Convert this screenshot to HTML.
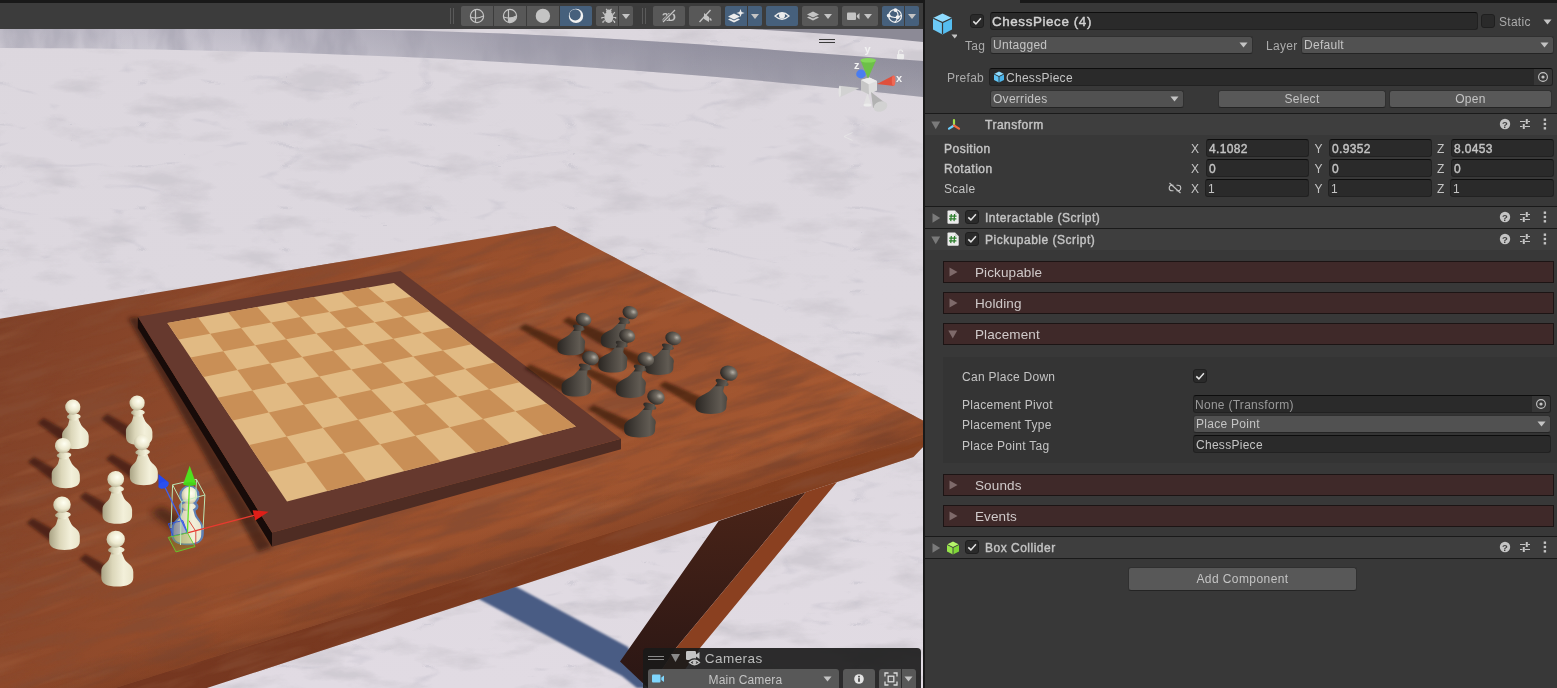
<!DOCTYPE html>
<html lang="en"><head><meta charset="utf-8"><title>Unity - ChessPiece (4)</title>
<style>
*{box-sizing:border-box;margin:0;padding:0}
html,body{width:1557px;height:688px;overflow:hidden;background:#383838;font-family:"Liberation Sans",sans-serif;font-size:12px;color:#c4c4c4}
.abs,.scene,.tb,.tbtn,.insp *{position:absolute}
#scenewrap{will-change:transform;position:absolute;left:0;top:0;width:923px;height:688px;overflow:hidden;background:#ddd8df}
.scene{left:0;top:0}
.tb{left:0;top:0;width:923px;height:29px;background:#3c3c3c;border-top:3px solid #191919}
.tbtn{top:3px;height:20px;background:#585858;border-radius:2px}
.tbtn.on{background:#46607c}
.tbtn svg{position:absolute;left:0;top:0}
#divider{position:absolute;left:923px;top:0;width:2px;height:688px;background:#191919}
.insp{will-change:transform;position:absolute;left:925px;top:0;width:632px;height:688px;background:#383838;overflow:hidden}
.t{white-space:nowrap;line-height:16px;height:16px;color:#c4c4c4;letter-spacing:.28px}
.b{font-weight:normal;-webkit-text-stroke-width:.4px;letter-spacing:.5px}
.num{letter-spacing:.35px}
.fld{background:#2a2a2a;border:1px solid #212121;border-top-color:#0d0d0d;border-radius:3px}
.dd{background:#515151;border:1px solid #303030;border-bottom-color:#242424;border-radius:3px}
.btn{background:#585858;border:1px solid #303030;border-bottom-color:#242424;border-radius:3px;text-align:center}
.hdr{left:0;width:632px;height:22px;background:#3e3e3e;border-top:1px solid #1a1a1a}
.bar{left:18px;width:611px;height:22px;background:#3f2929;border:1px solid #1c1414}
.cb{width:14px;height:14px;background:#2a2a2a;border:1px solid #1f1f1f;border-radius:3px}
.cam{will-change:transform;position:absolute;left:643px;top:648px;width:278px;height:40px;background:rgba(25,25,25,.91);border-radius:4px 4px 0 0}
</style></head><body>
<div id="scenewrap">
<svg class="scene" width="923" height="688" viewBox="0 0 923 688">
<defs>
<filter id="marble" x="0" y="0" width="100%" height="100%">
<feTurbulence type="fractalNoise" baseFrequency="0.014 0.042" numOctaves="5" seed="4" result="n"/>
<feColorMatrix in="n" type="matrix" values="0 0 0 0 0.60  0 0 0 0 0.57  0 0 0 0 0.62  3.6 0 0 0 -1.85" result="c"/>
<feComposite in="c" in2="SourceGraphic" operator="in"/>
</filter>
<filter id="veins" x="0" y="0" width="100%" height="100%">
<feTurbulence type="turbulence" baseFrequency="0.007 0.024" numOctaves="3" seed="31" result="n"/>
<feColorMatrix in="n" type="matrix" values="0 0 0 0 0.55  0 0 0 0 0.53  0 0 0 0 0.60  -9 0 0 0 0.95" result="c"/>
<feComposite in="c" in2="SourceGraphic" operator="in"/>
</filter>
<filter id="marblev" x="0" y="0" width="100%" height="100%">
<feTurbulence type="fractalNoise" baseFrequency="0.03 0.012" numOctaves="4" seed="5" result="n"/>
<feColorMatrix in="n" type="matrix" values="0 0 0 0 0.30  0 0 0 0 0.29  0 0 0 0 0.36  3 0 0 0 -1.35" result="c"/>
<feComposite in="c" in2="SourceGraphic" operator="in"/>
</filter>
<filter id="wood" x="0" y="0" width="100%" height="100%">
<feTurbulence type="fractalNoise" baseFrequency="0.012 0.085" numOctaves="4" seed="3" result="n"/>
<feColorMatrix in="n" type="matrix" values="0 0 0 0 0.24  0 0 0 0 0.07  0 0 0 0 0.03  3.2 0 0 0 -1.3" result="c"/>
<feComposite in="c" in2="SourceGraphic" operator="in"/>
</filter>
<filter id="woodl" x="0" y="0" width="100%" height="100%">
<feTurbulence type="fractalNoise" baseFrequency="0.006 0.07" numOctaves="3" seed="9" result="n"/>
<feColorMatrix in="n" type="matrix" values="0 0 0 0 0.85  0 0 0 0 0.45  0 0 0 0 0.22  2.2 0 0 0 -1.2" result="c"/>
<feComposite in="c" in2="SourceGraphic" operator="in"/>
</filter>
<filter id="blur15"><feGaussianBlur stdDeviation="1.6"/></filter>
<filter id="blur2"><feGaussianBlur stdDeviation="2"/></filter>
<filter id="blur3"><feGaussianBlur stdDeviation="3.5"/></filter>
<filter id="blur1"><feGaussianBlur stdDeviation="0.8"/></filter>
<linearGradient id="floorg" x1="0" y1="0" x2="0" y2="1">
<stop offset="0" stop-color="#dcd7de"/><stop offset="0.45" stop-color="#ddd8df"/><stop offset="1" stop-color="#e1dbe3"/>
</linearGradient>
<linearGradient id="wallg" x1="0" y1="0" x2="1" y2="0">
<stop offset="0" stop-color="#dcd8e0"/><stop offset="0.3" stop-color="#d2ced8"/><stop offset="0.52" stop-color="#b2afbb"/><stop offset="0.75" stop-color="#9a98a6"/><stop offset="1" stop-color="#8f8d9b"/>
</linearGradient>
<linearGradient id="topg" x1="0" y1="0" x2="1" y2="0.3">
<stop offset="0" stop-color="#7b3e27"/><stop offset="0.45" stop-color="#974e2c"/><stop offset="1" stop-color="#a65932"/>
</linearGradient>
<linearGradient id="wallv" x1="0" y1="0" x2="0" y2="1"><stop offset="0" stop-color="#40405a" stop-opacity="0.14"/><stop offset="1" stop-color="#fff" stop-opacity="0.14"/></linearGradient>
<linearGradient id="edgeg" gradientUnits="userSpaceOnUse" x1="500" y1="567" x2="488" y2="530"><stop offset="0" stop-color="#3a1208" stop-opacity="0.2"/><stop offset="1" stop-color="#3a1208" stop-opacity="0"/></linearGradient>
<linearGradient id="legg" x1="0" y1="0" x2="0" y2="1"><stop offset="0" stop-color="#4a2418"/><stop offset="1" stop-color="#2a1614"/></linearGradient>
<linearGradient id="frontg" x1="0" y1="0" x2="1" y2="0"><stop offset="0" stop-color="#743620"/><stop offset="1" stop-color="#84401f"/></linearGradient>
<linearGradient id="wb" x1="0" y1="0" x2="1" y2="0"><stop offset="0" stop-color="#a9a384"/><stop offset="0.35" stop-color="#dcd7ba"/><stop offset="0.7" stop-color="#f3f0da"/><stop offset="1" stop-color="#e9e5cb"/></linearGradient>
<radialGradient id="wh" cx="0.6" cy="0.38" r="0.7"><stop offset="0" stop-color="#fffff2"/><stop offset="0.55" stop-color="#ece8ce"/><stop offset="1" stop-color="#b5af90"/></radialGradient>
<linearGradient id="bb" x1="0" y1="0" x2="1" y2="0"><stop offset="0" stop-color="#2a2622"/><stop offset="0.45" stop-color="#4a453f"/><stop offset="0.8" stop-color="#615b53"/><stop offset="1" stop-color="#4b463f"/></linearGradient>
<radialGradient id="bh" cx="0.68" cy="0.35" r="0.7"><stop offset="0" stop-color="#b4afa5"/><stop offset="0.3" stop-color="#716b62"/><stop offset="1" stop-color="#2e2a26"/></radialGradient>
<radialGradient id="wp" cx="0.4" cy="0.35" r="0.75">
<stop offset="0" stop-color="#fbf8e6"/><stop offset="0.6" stop-color="#e6e0c4"/><stop offset="1" stop-color="#b8b090"/>
</radialGradient>
<radialGradient id="bp" cx="0.6" cy="0.3" r="0.75">
<stop offset="0" stop-color="#8c877d"/><stop offset="0.45" stop-color="#57524b"/><stop offset="1" stop-color="#2e2a26"/>
</radialGradient>
<clipPath id="frontclip"><polygon points="923,432 923,447 913.4,457 207,688 105,688"/></clipPath>
<clipPath id="tableclip"><polygon points="0,318.7 555,226 923,420.4 923,434.5 115,688 0,688"/></clipPath>
</defs>
<rect x="0" y="0" width="923" height="688" fill="url(#floorg)"/>
<rect x="0" y="29" width="923" height="659" fill="#000" filter="url(#marble)" opacity="0.75"/>
<rect x="0" y="29" width="923" height="659" fill="#000" filter="url(#veins)" opacity="0.5"/>
<path d="M750,29 L923,29 L923,42 Q860,35 750,29 Z" fill="#8c8a96"/>
<path d="M0,29 L334,29 Q560,32 800,52 L923,61 L923,97 Q700,72 440,58.5 Q200,48 0,48 Z" fill="url(#wallg)"/>
<path d="M0,29 L334,29 Q560,32 800,52 L923,61 L923,97 Q700,72 440,58.5 Q200,48 0,48 Z" fill="url(#wallv)"/>
<path d="M0,29 L334,29 Q560,32 800,52 L923,61 L923,97 Q700,72 440,58.5 Q200,48 0,48 Z" fill="#000" filter="url(#marblev)" opacity="0.4"/>
<polygon points="477,598 514,585.5 628,647 646,688 637,688 622,676" fill="#485c84" filter="url(#blur1)"/>
<polygon points="718.7,521 806,492 676,648 650,688 648,688 620,661.4" fill="url(#legg)"/>
<polygon points="806,492 837,482 700,648 672,688 650,688 676,648" fill="#8a4020"/>
<polygon points="923,432 923,447 913.4,457 207,688 105,688" fill="url(#frontg)"/>
<g clip-path="url(#frontclip)"><rect x="-100" y="150" width="1150" height="650" fill="#000" filter="url(#wood)" opacity="0.6" transform="rotate(-18 460 450)"/></g>
<polygon points="0,318.7 555,226 923,420.4 923,434.5 115,688 0,688" fill="url(#topg)"/>
<g clip-path="url(#tableclip)"><rect x="-100" y="150" width="1150" height="650" fill="#000" filter="url(#wood)" opacity="0.75" transform="rotate(-17 460 450)"/><rect x="-100" y="150" width="1150" height="650" fill="#000" filter="url(#woodl)" opacity="0.18" transform="rotate(-17 460 450)"/></g>
<g clip-path="url(#tableclip)"><polygon points="923,434.5 115,688 0,688 0,660 923,396" fill="url(#edgeg)"/></g>
<polygon points="128.0,318.0 137.8,316.7 272.0,546.7 258.0,552.0" fill="#1e0c08" opacity="0.55" filter="url(#blur2)"/>
<polygon points="137.8,316.7 272.0,532.6 272.0,546.7 137.8,328.0" fill="#170b09"/>
<polygon points="272.0,532.6 621.0,438.8 621.0,449.2 272.0,546.7" fill="#4e2c23"/>
<polygon points="137.8,316.7 400.5,271.0 621.0,438.8 272.0,532.6" fill="#66392e"/>
<polygon points="167.4,322.9 393.8,282.9 575.9,426.6 287.0,501.5" fill="#e1ba83"/>
<polygon points="167.4,322.9 198.1,317.5 210.2,333.8 178.6,339.6" fill="#c98f56"/>
<polygon points="228.1,312.2 257.3,307.0 271.2,322.5 241.1,328.1" fill="#c98f56"/>
<polygon points="285.9,302.0 313.8,297.0 329.3,311.9 300.6,317.1" fill="#c98f56"/>
<polygon points="341.1,292.2 367.7,287.5 384.6,301.7 357.3,306.7" fill="#c98f56"/>
<polygon points="210.2,333.8 241.1,328.1 255.1,345.2 223.3,351.3" fill="#c98f56"/>
<polygon points="271.2,322.5 300.6,317.1 316.3,333.4 286.1,339.2" fill="#c98f56"/>
<polygon points="329.3,311.9 357.3,306.7 374.6,322.2 345.8,327.7" fill="#c98f56"/>
<polygon points="384.6,301.7 411.4,296.8 430.1,311.5 402.7,316.8" fill="#c98f56"/>
<polygon points="190.6,357.5 223.3,351.3 237.3,370.1 203.5,376.9" fill="#c98f56"/>
<polygon points="255.1,345.2 286.1,339.2 302.1,357.1 270.1,363.5" fill="#c98f56"/>
<polygon points="316.3,333.4 345.8,327.7 363.6,344.7 333.2,350.8" fill="#c98f56"/>
<polygon points="374.6,322.2 402.7,316.8 422.0,333.0 393.2,338.8" fill="#c98f56"/>
<polygon points="237.3,370.1 270.1,363.5 286.3,383.3 252.4,390.4" fill="#c98f56"/>
<polygon points="302.1,357.1 333.2,350.8 351.4,369.6 319.3,376.4" fill="#c98f56"/>
<polygon points="363.6,344.7 393.2,338.8 413.1,356.6 382.7,363.0" fill="#c98f56"/>
<polygon points="422.0,333.0 450.1,327.4 471.6,344.3 442.8,350.4" fill="#c98f56"/>
<polygon points="217.5,397.8 252.4,390.4 268.8,412.5 232.7,420.4" fill="#c98f56"/>
<polygon points="286.3,383.3 319.3,376.4 338.0,397.2 303.9,404.7" fill="#c98f56"/>
<polygon points="351.4,369.6 382.7,363.0 403.3,382.8 371.1,389.9" fill="#c98f56"/>
<polygon points="413.1,356.6 442.8,350.4 465.1,369.1 434.6,375.9" fill="#c98f56"/>
<polygon points="268.8,412.5 303.9,404.7 322.9,428.0 286.6,436.4" fill="#c98f56"/>
<polygon points="338.0,397.2 371.1,389.9 392.3,411.8 358.1,419.8" fill="#c98f56"/>
<polygon points="403.3,382.8 434.6,375.9 457.8,396.6 425.6,404.1" fill="#c98f56"/>
<polygon points="465.1,369.1 494.8,362.6 519.7,382.3 489.2,389.3" fill="#c98f56"/>
<polygon points="249.2,445.1 286.6,436.4 306.1,462.5 267.2,472.0" fill="#c98f56"/>
<polygon points="322.9,428.0 358.1,419.8 380.1,444.3 343.7,453.3" fill="#c98f56"/>
<polygon points="392.3,411.8 425.6,404.1 449.7,427.3 415.4,435.7" fill="#c98f56"/>
<polygon points="457.8,396.6 489.2,389.3 515.3,411.2 483.0,419.1" fill="#c98f56"/>
<polygon points="306.1,462.5 343.7,453.3 366.3,480.9 327.3,491.0" fill="#c98f56"/>
<polygon points="380.1,444.3 415.4,435.7 440.6,461.7 404.1,471.1" fill="#c98f56"/>
<polygon points="449.7,427.3 483.0,419.1 510.3,443.6 476.0,452.5" fill="#c98f56"/>
<polygon points="515.3,411.2 546.7,403.5 575.9,426.6 543.6,435.0" fill="#c98f56"/>
<polygon points="141.2,442.0 130.2,441.0 101.2,419.0 107.2,414.0 141.2,433.0" fill="#2a1008" opacity="0.6" filter="url(#blur15)"/>
<polygon points="77.4,446.0 66.4,445.0 37.4,423.0 43.4,418.0 77.4,437.0" fill="#2a1008" opacity="0.6" filter="url(#blur15)"/>
<polygon points="145.8,482.0 134.8,481.0 105.8,459.0 111.8,454.0 145.8,473.0" fill="#2a1008" opacity="0.6" filter="url(#blur15)"/>
<polygon points="67.8,485.0 56.8,484.0 27.8,462.0 33.8,457.0 67.8,476.0" fill="#2a1008" opacity="0.6" filter="url(#blur15)"/>
<polygon points="119.3,520.0 108.3,519.0 79.3,497.0 85.3,492.0 119.3,511.0" fill="#2a1008" opacity="0.6" filter="url(#blur15)"/>
<polygon points="66.5,546.0 55.5,545.0 26.5,523.0 32.5,518.0 66.5,537.0" fill="#2a1008" opacity="0.6" filter="url(#blur15)"/>
<polygon points="119.3,582.0 108.3,581.0 79.3,559.0 85.3,554.0 119.3,573.0" fill="#2a1008" opacity="0.6" filter="url(#blur15)"/>
<polygon points="614.4,348.0 601.4,345.0 562.4,321.0 568.4,317.0 616.4,338.0" fill="#200b05" opacity="0.55" filter="url(#blur15)"/>
<polygon points="571.0,355.0 558.0,352.0 519.0,328.0 525.0,324.0 573.0,345.0" fill="#200b05" opacity="0.55" filter="url(#blur15)"/>
<polygon points="612.6,372.0 599.6,369.0 560.6,345.0 566.6,341.0 614.6,362.0" fill="#200b05" opacity="0.55" filter="url(#blur15)"/>
<polygon points="659.0,374.5 646.0,371.5 607.0,347.5 613.0,343.5 661.0,364.5" fill="#200b05" opacity="0.55" filter="url(#blur15)"/>
<polygon points="576.2,395.5 563.2,392.5 524.2,368.5 530.2,364.5 578.2,385.5" fill="#200b05" opacity="0.55" filter="url(#blur15)"/>
<polygon points="630.6,396.8 617.6,393.8 578.6,369.8 584.6,365.8 632.6,386.8" fill="#200b05" opacity="0.55" filter="url(#blur15)"/>
<polygon points="710.9,412.3 697.9,409.3 658.9,385.3 664.9,381.3 712.9,402.3" fill="#200b05" opacity="0.55" filter="url(#blur15)"/>
<polygon points="639.6,435.9 626.6,432.9 587.6,408.9 593.6,404.9 641.6,425.9" fill="#200b05" opacity="0.55" filter="url(#blur15)"/>
<path d="M139.2,445.0 C147.1,445.0 152.4,443.0 152.4,437.0 L152.4,432.0 C152.1,426.0 147.3,424.8 145.1,421.0 L142.5,415.0 L133.7,415.0 L132.0,421.0 C130.2,424.8 125.6,426.0 125.9,432.0 L126.0,437.0 C126.0,443.0 131.3,445.0 139.2,445.0 Z" fill="url(#wb)"/>
<polygon points="133.9,416.5 142.5,416.5 142.3,410.0 133.1,410.0" fill="url(#wb)"/>
<ellipse cx="137.9" cy="412.5" rx="6.9" ry="3.0" fill="url(#wb)" transform="rotate(-2.8 137.9 412.5)"/>
<ellipse cx="137.1" cy="403.0" rx="7.6" ry="7.6" fill="url(#wh)" transform="rotate(-2.8 137.1 403.0)"/>
<path d="M75.4,449.0 C83.4,449.0 88.7,447.0 88.7,441.0 L88.7,436.0 C88.3,430.0 83.5,428.8 81.2,425.0 L78.4,419.1 L69.6,419.1 L68.0,425.0 C66.3,428.8 61.7,430.0 62.1,436.0 L62.1,441.0 C62.1,447.0 67.4,449.0 75.4,449.0 Z" fill="url(#wb)"/>
<polygon points="69.9,420.6 78.5,420.6 78.1,414.1 68.9,414.1" fill="url(#wb)"/>
<ellipse cx="73.8" cy="416.6" rx="6.9" ry="3.0" fill="url(#wb)" transform="rotate(-3.5 73.8 416.6)"/>
<ellipse cx="72.8" cy="407.1" rx="7.6" ry="7.6" fill="url(#wh)" transform="rotate(-3.5 72.8 407.1)"/>
<path d="M143.8,485.2 C152.2,485.2 157.8,483.2 157.8,477.1 L157.8,472.0 C157.5,465.9 152.5,464.6 150.2,460.8 L147.4,454.6 L138.2,454.6 L136.2,460.8 C134.4,464.6 129.5,465.9 129.8,472.0 L129.8,477.1 C129.8,483.2 135.4,485.2 143.8,485.2 Z" fill="url(#wb)"/>
<polygon points="138.4,456.2 147.4,456.2 147.3,449.5 137.6,449.5" fill="url(#wb)"/>
<ellipse cx="142.6" cy="452.1" rx="7.3" ry="3.1" fill="url(#wb)" transform="rotate(-2.5 142.6 452.1)"/>
<ellipse cx="141.9" cy="442.4" rx="8.0" ry="7.8" fill="url(#wh)" transform="rotate(-2.5 141.9 442.4)"/>
<path d="M65.8,488.2 C74.2,488.2 79.9,486.1 79.9,480.1 L79.8,475.0 C79.4,468.9 74.3,467.7 71.9,463.8 L68.9,457.8 L59.6,457.8 L57.9,463.8 C56.1,467.7 51.3,468.9 51.7,475.0 L51.7,480.1 C51.7,486.1 57.4,488.2 65.8,488.2 Z" fill="url(#wb)"/>
<polygon points="59.9,459.3 69.0,459.3 68.6,452.7 58.9,452.7" fill="url(#wb)"/>
<ellipse cx="64.0" cy="455.2" rx="7.3" ry="3.0" fill="url(#wb)" transform="rotate(-3.8 64.0 455.2)"/>
<ellipse cx="62.9" cy="445.6" rx="8.0" ry="7.7" fill="url(#wh)" transform="rotate(-3.8 62.9 445.6)"/>
<path d="M117.3,523.8 C126.2,523.8 132.1,521.6 132.1,515.3 L132.1,509.9 C131.8,503.6 126.5,502.3 124.1,498.2 L121.3,491.9 L111.6,491.9 L109.5,498.2 C107.4,502.3 102.3,503.6 102.5,509.9 L102.5,515.3 C102.5,521.6 108.4,523.8 117.3,523.8 Z" fill="url(#wb)"/>
<polygon points="111.8,493.5 121.3,493.5 121.3,486.5 111.0,486.5" fill="url(#wb)"/>
<ellipse cx="116.3" cy="489.2" rx="7.7" ry="3.2" fill="url(#wb)" transform="rotate(-2.0 116.3 489.2)"/>
<ellipse cx="115.7" cy="479.1" rx="8.4" ry="8.1" fill="url(#wh)" transform="rotate(-2.0 115.7 479.1)"/>
<path d="M64.5,549.9 C73.7,549.9 79.8,547.8 79.8,541.3 L79.8,535.9 C79.4,529.5 73.9,528.2 71.3,524.1 L68.2,517.6 L58.1,517.6 L56.1,524.1 C54.1,528.2 48.8,529.5 49.2,535.9 L49.2,541.3 C49.2,547.8 55.3,549.9 64.5,549.9 Z" fill="url(#wb)"/>
<polygon points="58.4,519.2 68.3,519.2 68.0,512.2 57.4,512.2" fill="url(#wb)"/>
<ellipse cx="62.9" cy="514.9" rx="7.9" ry="3.2" fill="url(#wb)" transform="rotate(-3.1 62.9 514.9)"/>
<ellipse cx="62.0" cy="504.7" rx="8.7" ry="8.2" fill="url(#wh)" transform="rotate(-3.1 62.0 504.7)"/>
<path d="M117.3,586.5 C126.9,586.5 133.3,584.2 133.3,577.5 L133.3,571.9 C133.1,565.1 127.3,563.8 124.7,559.5 L121.8,552.8 L111.2,552.8 L108.8,559.5 C106.6,563.8 101.0,565.1 101.3,571.9 L101.3,577.5 C101.3,584.2 107.7,586.5 117.3,586.5 Z" fill="url(#wb)"/>
<polygon points="111.4,554.5 121.7,554.5 121.7,547.2 110.6,547.2" fill="url(#wb)"/>
<ellipse cx="116.3" cy="550.0" rx="8.3" ry="3.4" fill="url(#wb)" transform="rotate(-1.9 116.3 550.0)"/>
<ellipse cx="115.7" cy="539.3" rx="9.2" ry="8.5" fill="url(#wh)" transform="rotate(-1.9 115.7 539.3)"/>
<path d="M614.4,348.2 C622.6,348.2 628.0,346.5 628.0,341.4 L628.3,337.2 C630.6,332.1 625.1,331.1 625.2,327.8 L626.6,322.8 L618.9,322.8 L613.6,327.8 C610.0,331.1 603.3,332.1 601.0,337.2 L600.8,341.4 C600.8,346.5 606.2,348.2 614.4,348.2 Z" fill="url(#bb)"/>
<polygon points="618.1,324.0 625.7,324.0 629.8,318.5 621.7,318.5" fill="url(#bb)"/>
<ellipse cx="624.2" cy="320.6" rx="6.1" ry="2.5" fill="url(#bb)" transform="rotate(22.3 624.2 320.6)"/>
<ellipse cx="630.2" cy="312.6" rx="7.9" ry="6.4" fill="url(#bh)" transform="rotate(22.3 630.2 312.6)"/>
<path d="M571.0,355.2 C579.2,355.2 584.6,353.5 584.6,348.4 L584.8,344.1 C586.7,339.1 581.0,338.0 580.8,334.8 L581.5,329.7 L573.7,329.7 L569.2,334.8 C565.9,338.0 559.4,339.1 557.5,344.1 L557.4,348.4 C557.4,353.5 562.8,355.2 571.0,355.2 Z" fill="url(#bb)"/>
<polygon points="573.1,331.0 580.7,331.0 584.0,325.4 575.9,325.4" fill="url(#bb)"/>
<ellipse cx="578.8" cy="327.6" rx="6.1" ry="2.5" fill="url(#bb)" transform="rotate(18.3 578.8 327.6)"/>
<ellipse cx="583.5" cy="319.5" rx="7.9" ry="6.5" fill="url(#bh)" transform="rotate(18.3 583.5 319.5)"/>
<path d="M612.6,372.5 C621.2,372.5 626.9,370.7 626.9,365.5 L627.1,361.1 C629.2,355.9 623.4,354.8 623.3,351.5 L624.4,346.3 L616.3,346.3 L611.2,351.5 C607.6,354.8 600.7,355.9 598.5,361.1 L598.3,365.5 C598.3,370.7 604.0,372.5 612.6,372.5 Z" fill="url(#bb)"/>
<polygon points="615.6,347.6 623.5,347.6 627.3,341.9 618.8,341.9" fill="url(#bb)"/>
<ellipse cx="621.7" cy="344.1" rx="6.3" ry="2.6" fill="url(#bb)" transform="rotate(20.4 621.7 344.1)"/>
<ellipse cx="627.2" cy="335.8" rx="8.2" ry="6.6" fill="url(#bh)" transform="rotate(20.4 627.2 335.8)"/>
<path d="M659.0,374.9 C667.6,374.9 673.3,373.2 673.3,368.0 L673.5,363.6 C675.6,358.4 669.7,357.4 669.6,354.1 L670.6,348.8 L662.5,348.8 L657.5,354.1 C653.9,357.4 647.1,358.4 644.9,363.6 L644.7,368.0 C644.7,373.2 650.4,374.9 659.0,374.9 Z" fill="url(#bb)"/>
<polygon points="661.8,350.1 669.7,350.1 673.5,344.5 665.0,344.5" fill="url(#bb)"/>
<ellipse cx="667.9" cy="346.7" rx="6.3" ry="2.6" fill="url(#bb)" transform="rotate(20.1 667.9 346.7)"/>
<ellipse cx="673.3" cy="338.4" rx="8.2" ry="6.6" fill="url(#bh)" transform="rotate(20.1 673.3 338.4)"/>
<path d="M576.2,396.5 C585.0,396.5 590.9,394.6 590.9,389.2 L591.1,384.6 C593.2,379.1 587.2,378.0 587.0,374.5 L587.9,369.1 L579.6,369.1 L574.5,374.5 C570.9,378.0 563.8,379.1 561.7,384.6 L561.5,389.2 C561.5,394.6 567.4,396.5 576.2,396.5 Z" fill="url(#bb)"/>
<polygon points="578.9,370.4 587.1,370.4 590.8,364.5 582.1,364.5" fill="url(#bb)"/>
<ellipse cx="585.1" cy="366.8" rx="6.6" ry="2.7" fill="url(#bb)" transform="rotate(19.3 585.1 366.8)"/>
<ellipse cx="590.5" cy="358.1" rx="8.5" ry="6.9" fill="url(#bh)" transform="rotate(19.3 590.5 358.1)"/>
<path d="M630.6,397.9 C639.4,397.9 645.3,396.0 645.3,390.5 L645.5,385.9 C647.8,380.3 641.8,379.2 641.7,375.7 L642.8,370.2 L634.4,370.2 L629.2,375.7 C625.4,379.2 618.3,380.3 616.1,385.9 L615.9,390.5 C615.9,396.0 621.8,397.9 630.6,397.9 Z" fill="url(#bb)"/>
<polygon points="633.7,371.6 641.9,371.6 645.9,365.6 637.1,365.6" fill="url(#bb)"/>
<ellipse cx="640.0" cy="367.9" rx="6.6" ry="2.8" fill="url(#bb)" transform="rotate(20.1 640.0 367.9)"/>
<ellipse cx="645.8" cy="359.1" rx="8.5" ry="7.0" fill="url(#bh)" transform="rotate(20.1 645.8 359.1)"/>
<path d="M710.9,413.9 C720.2,413.9 726.4,412.0 726.4,406.2 L726.7,401.3 C729.3,395.5 723.1,394.3 723.2,390.7 L724.8,384.8 L716.0,384.8 L710.0,390.7 C705.9,394.3 698.3,395.5 695.7,401.3 L695.4,406.2 C695.4,412.0 701.6,413.9 710.9,413.9 Z" fill="url(#bb)"/>
<polygon points="715.1,386.3 723.7,386.3 728.4,380.0 719.2,380.0" fill="url(#bb)"/>
<ellipse cx="722.1" cy="382.4" rx="6.9" ry="2.9" fill="url(#bb)" transform="rotate(22.2 722.1 382.4)"/>
<ellipse cx="728.9" cy="373.2" rx="9.0" ry="7.4" fill="url(#bh)" transform="rotate(22.2 728.9 373.2)"/>
<path d="M639.6,437.4 C648.9,437.4 655.1,435.5 655.1,429.7 L655.3,424.9 C657.8,419.2 651.4,418.0 651.4,414.4 L652.7,408.6 L643.9,408.6 L638.2,414.4 C634.2,418.0 626.8,419.2 624.3,424.9 L624.1,429.7 C624.1,435.5 630.3,437.4 639.6,437.4 Z" fill="url(#bb)"/>
<polygon points="643.1,410.1 651.7,410.1 656.0,403.8 646.8,403.8" fill="url(#bb)"/>
<ellipse cx="649.8" cy="406.2" rx="6.9" ry="2.9" fill="url(#bb)" transform="rotate(20.8 649.8 406.2)"/>
<ellipse cx="656.0" cy="397.1" rx="9.0" ry="7.3" fill="url(#bh)" transform="rotate(20.8 656.0 397.1)"/>
<g>
<polygon points="189,538 178,535 150,512 162,506 189,524" fill="#2e120a" opacity="0.6" filter="url(#blur3)"/>
<g fill="#5a86c4" stroke="#5a86c4" stroke-width="4.5" stroke-linejoin="round" opacity="0.9"><circle cx="189.4" cy="495.4" r="8"/><path d="M187.4,543 C196,543 201.6,540 201.6,533 L201.6,530 C201.6,522 194,520 193.4,511 L183.6,511 C182.6,520 173.2,522 173.2,530 L173.2,533 C173.2,540 179,543 187.4,543 Z"/><ellipse cx="188.6" cy="506.5" rx="7.6" ry="3.6"/></g>
<path d="M187.4,543.6 C195.7,543.6 201.2,541.3 201.2,534.4 L201.3,528.7 C201.6,521.8 196.7,520.4 194.9,516.0 L193.0,509.2 L183.9,509.2 L181.2,516.0 C178.9,520.4 173.9,521.8 173.6,528.7 L173.6,534.4 C173.6,541.3 179.1,543.6 187.4,543.6 Z" fill="url(#wb)"/>
<polygon points="183.9,510.9 192.8,510.9 193.6,503.4 184.1,503.4" fill="url(#wb)"/>
<ellipse cx="188.6" cy="506.3" rx="7.2" ry="3.4" fill="url(#wb)" transform="rotate(2.3 188.6 506.3)"/>
<ellipse cx="189.4" cy="495.4" rx="7.9" ry="8.7" fill="url(#wh)" transform="rotate(2.3 189.4 495.4)"/>
<polygon points="168.3,523.7 182.8,520.6 187.4,532.8 172.9,535.9" fill="#2d4fd8" fill-opacity="0.25" stroke="#2d4fd8" stroke-width="0.9"/>
<polygon points="168.3,537.4 187.4,532.8 195,546.5 176,551.9" fill="#8a9a2a" fill-opacity="0.3" stroke="#62d02a" stroke-width="0.9"/>
<path d="M188.9,520.6 L195.8,531.3 L195.8,544.3" fill="none" stroke="#d83a30" stroke-width="0.9"/>
<g fill="none" stroke="#bfeebc" stroke-width="1" opacity="0.95"><polygon points="172.6,484.8 196.5,479.4 204.9,495 181.3,501.5"/><path d="M172.6,484.8 L171,528 M181.3,501.5 L180.5,545 M204.9,495 L203,530 M196.5,479.4 L195.5,500"/></g>
<path d="M187.4,532.8 L254,515.3" stroke="#e83a30" stroke-width="1.3"/>
<polygon points="268.7,511.8 252.6,510.2 255.2,520.6" fill="#e01e18"/>
<path d="M187.4,532.8 L163.7,484.8" stroke="#3d62f0" stroke-width="1.3"/>
<polygon points="158.4,474.1 158.6,487.4 168.8,482.4" fill="#2448ee"/><ellipse cx="163.7" cy="485" rx="5.4" ry="3.4" fill="#2a50f2" transform="rotate(-26 163.7 485)"/>
<path d="M187.4,532.8 L189.5,484" stroke="#62e628" stroke-width="1.3"/>
<polygon points="189.7,465.7 183.2,484 196.2,484" fill="#4fe01e"/><ellipse cx="189.7" cy="484" rx="6.5" ry="1.8" fill="#46d21a"/>
</g>
<g>
<g stroke="#3a3a3a" stroke-width="1.2"><path d="M819,39.5 H835 M819,42.5 H835"/></g>
<polygon points="859.5,88 839.5,85.7 840,97.3" fill="#d2d2d2"/><ellipse cx="839.8" cy="91.5" rx="1.2" ry="5.8" fill="#e4e4e4"/>
<polygon points="867.4,93 863.5,105 871.5,105" fill="#e2e2e2" opacity="0.95"/>
<ellipse cx="867.5" cy="105" rx="4" ry="1.6" fill="#ececec"/>
<polygon points="861,80 869.5,77.5 877,81 877,90.5 869,94.5 861,90.5" fill="#dedede"/>
<polygon points="861,80 869.5,77.5 877,81 868.6,84.2" fill="#ebebeb"/>
<polygon points="861,80 868.6,84.2 869,94.5 861,90.5" fill="#c6c6c6"/>
<polygon points="871,92 873,108 886.5,104" fill="#b2b2b2"/>
<ellipse cx="880.5" cy="106.5" rx="7" ry="5" fill="#d2d2d2" transform="rotate(-20 880.5 106.5)"/>
<polygon points="877,84 893.5,75.5 894,86" fill="#e0503c"/>
<ellipse cx="893.6" cy="80.7" rx="1.8" ry="5.2" fill="#ee6a56"/>
<ellipse cx="861" cy="74" rx="4.8" ry="4.4" fill="#4a7df0"/>
<polygon points="868,78.5 860.5,60.5 876,60.5" fill="#6dc048"/>
<ellipse cx="868.2" cy="60.3" rx="7.8" ry="2.3" fill="#84d85a"/>
<g font-family="Liberation Sans, sans-serif" font-size="11" fill="#f2f2f2" font-weight="bold"><text x="864.5" y="53">y</text><text x="896" y="82">x</text><text x="854" y="69">z</text></g>
<g fill="#eee" opacity="0.95"><rect x="897" y="54" width="7" height="5.2" rx="1"/><path d="M898.6,54 v-2 a2,2 0 0 1 4,0" fill="none" stroke="#eee" stroke-width="1.2"/></g>
<path d="M852.5,132.5 L844,136.5 L852.5,140.5" fill="none" stroke="#e6e6e6" stroke-width="1" opacity="0.8"/>
</g>
</svg>
<div class="tb">
<svg class="abs" style="left:448px;top:5px" width="10" height="16"><path d="M2.5,0V16M5.5,0V16" stroke="#5a5a5a" stroke-width="1"/></svg>
<div class="tbtn" style="left:461px;width:32px;border-radius:2px 0 0 2px"><svg width="32" height="20"><g fill="none" stroke="#c4c4c4" stroke-width="1.2"><circle cx="16" cy="10" r="6.6"/><path d="M14.5,3.6 V16.4 M9.5,11 Q16,13.5 22.5,10"/></g></svg></div>
<div class="tbtn" style="left:494px;width:32px;border-radius:0"><svg width="32" height="20"><g fill="none" stroke="#c4c4c4" stroke-width="1.2"><circle cx="16" cy="10" r="6.6"/><path d="M14.5,3.6 V16.4 M9.5,11 Q16,13.5 22.5,10"/></g><path d="M15,11.8 Q19,12 22.3,10.3 A6.6,6.6 0 0 1 15,16.5 Z" fill="#c4c4c4"/></svg></div>
<div class="tbtn" style="left:527px;width:32px;border-radius:0"><svg width="32" height="20"><circle cx="15.9" cy="9.9" r="7.2" fill="#c4c4c4"/></svg></div>
<div class="tbtn on" style="left:560px;width:32px;border-radius:0 2px 2px 0"><svg width="32" height="20"><circle cx="16" cy="9.9" r="7.2" fill="#f2f2f2"/><circle cx="15.2" cy="8.8" r="5.6" fill="#46607c"/></svg></div>
<div class="tbtn" style="left:596px;width:22px;border-radius:2px 0 0 2px"><svg width="22" height="20"><g fill="#c4c4c4"><ellipse cx="12.8" cy="11.3" rx="4.5" ry="5.6"/><ellipse cx="12.8" cy="5.6" rx="2.7" ry="2.2"/></g><path d="M8.8,8.8 L6.8,6.2 M16.8,8.8 L18.8,6.2 M8.4,11.5 H5.9 V12.8 M17.2,11.5 H19.7 V12.8 M8.8,14.5 L7,15.5 V17 M16.8,14.5 L18.6,15.5 V17 M11.3,4 L10,3 M14.3,4 L15.6,3" stroke="#c4c4c4" stroke-width="1.1" fill="none"/></svg></div>
<div class="tbtn" style="left:619px;width:14px;border-radius:0 2px 2px 0"><svg width="14" height="20"><path d="M3,8 H11 L7,13 Z" fill="#c4c4c4"/></svg></div>
<svg class="abs" style="left:640px;top:5px" width="10" height="16"><path d="M2.5,0V16M5.5,0V16" stroke="#5a5a5a" stroke-width="1"/></svg>
<div class="tbtn" style="left:653px;width:32px"><svg width="32" height="20"><text x="9" y="14.5" font-family="Liberation Sans, sans-serif" font-size="11.5" font-weight="bold" fill="#c4c4c4" letter-spacing="-0.8">2D</text><path d="M10,16 L22,4" stroke="#585858" stroke-width="3"/><path d="M10,16 L22,4" stroke="#c4c4c4" stroke-width="1.2"/></svg></div>
<div class="tbtn" style="left:689px;width:32px"><svg width="32" height="20"><path d="M15,7 L20,11 V16 L15,13 Z M20.5,11.5 l2,1.5 v2 l-2,-1z" fill="#c4c4c4"/><path d="M10.5,16 L21.5,4" stroke="#c4c4c4" stroke-width="1.3"/></svg></div>
<div class="tbtn on" style="left:725px;width:22px;border-radius:2px 0 0 2px"><svg width="22" height="20"><path d="M3,10.5 L9,7.5 L15,10.5 L9,13.5 Z M3,13.5 L9,16.5 L15,13.5 L13,12.5 L9,14.5 L5,12.5Z" fill="#ececec"/><path d="M15.5,3 L16.6,6 L19.6,7 L16.6,8 L15.5,11 L14.4,8 L11.4,7 L14.4,6 Z" fill="#ececec"/></svg></div>
<div class="tbtn on" style="left:748px;width:14px;border-radius:0 2px 2px 0"><svg width="14" height="20"><path d="M3,8 H11 L7,13 Z" fill="#c4c4c4"/></svg></div>
<div class="tbtn on" style="left:766px;width:32px"><svg width="32" height="20"><path d="M9,10 Q16,3.5 23,10 Q16,16.5 9,10 Z" fill="none" stroke="#ececec" stroke-width="1.3"/><circle cx="16" cy="9.6" r="3" fill="#ececec"/></svg></div>
<div class="tbtn" style="left:802px;width:36px"><svg width="36" height="20"><path d="M5,8.5 L11,5.5 L17,8.5 L11,11.5 Z" fill="#c4c4c4"/><path d="M5,11.5 L11,14.5 L17,11.5 L15,10.5 L11,12.5 L7,10.5Z" fill="#c4c4c4"/><path d="M22,8 H30 L26,13 Z" fill="#c4c4c4"/></svg></div>
<div class="tbtn" style="left:842px;width:36px"><svg width="36" height="20"><rect x="5" y="6.5" width="9" height="7.5" rx="1" fill="#c4c4c4"/><path d="M14.8,9.5 L17.5,7 V13.5 L14.8,11 Z" fill="#c4c4c4"/><path d="M22,8 H30 L26,13 Z" fill="#c4c4c4"/></svg></div>
<div class="tbtn on" style="left:882px;width:22px;border-radius:2px 0 0 2px"><svg width="22" height="20"><g fill="none" stroke="#f0f0f0" stroke-width="1.2"><circle cx="13.1" cy="9.9" r="6.4"/><path d="M13.4,4.1 Q17,7 15.6,11.2 M6.6,9.6 Q11,12.3 15.6,11.2 M15.6,11.2 Q15.3,14.5 12.8,16.2 M15.6,11.2 Q18,10.6 19.4,9.2"/></g><g fill="#f4f4f4"><circle cx="13.4" cy="4.1" r="1.9"/><circle cx="6.7" cy="9.6" r="1.9"/><circle cx="15.6" cy="11.2" r="1.9"/></g></svg></div>
<div class="tbtn on" style="left:905px;width:14px;border-radius:0 2px 2px 0"><svg width="14" height="20"><path d="M3,8 H11 L7,13 Z" fill="#c4c4c4"/></svg></div>
</div>
<div class="cam">
<svg class="abs" style="left:0;top:0" width="278" height="40">
<path d="M5,8.5 H21 M5,11.5 H21" stroke="#8a8a8a" stroke-width="1"/>
<path d="M28,6 H37 L32.5,14 Z" fill="#8a8a8a"/>
<rect x="43" y="3" width="10" height="9" rx="1.2" fill="#c4c4c4"/><path d="M53,6.5 L56.5,4 V11 L53,8.5Z" fill="#c4c4c4"/>
<ellipse cx="51.5" cy="14.5" rx="6.2" ry="4.2" fill="#2a2a2a"/><path d="M46.5,14.5 Q51.5,10 56.5,14.5 Q51.5,19 46.5,14.5 Z" fill="none" stroke="#c4c4c4" stroke-width="1.3"/><circle cx="51.5" cy="14.5" r="1.8" fill="#c4c4c4"/>
</svg>
<div class="t abs" style="left:61.8px;top:3px;font-size:13.5px;letter-spacing:.45px;color:#bdbdbd">Cameras</div>
<div class="abs" style="left:5px;top:21px;width:191px;height:22px;background:#585858;border-radius:3px"></div>
<svg class="abs" style="left:9px;top:26px" width="14" height="10"><rect x="0" y="0.5" width="8.5" height="8" rx="1" fill="#7fd6fd"/><path d="M9.3,3.5 L12,1.5 V8 L9.3,6Z" fill="#7fd6fd"/></svg>
<div class="t abs" style="left:65.6px;top:24px;font-size:12px;letter-spacing:.15px;color:#c4c4c4">Main Camera</div>
<svg class="abs" style="left:180px;top:27px" width="10" height="8"><path d="M0.5,1.5 H8.5 L4.5,6.5 Z" fill="#c4c4c4"/></svg>
<div class="abs" style="left:200px;top:21px;width:32px;height:22px;background:#585858;border-radius:3px"></div>
<svg class="abs" style="left:210px;top:25px" width="12" height="12"><circle cx="6" cy="6" r="4.8" fill="#e4e4e4"/><rect x="5.2" y="5.2" width="1.6" height="3.6" fill="#3a3a3a"/><rect x="5.2" y="2.8" width="1.6" height="1.6" fill="#3a3a3a"/></svg>
<div class="abs" style="left:236px;top:21px;width:22px;height:22px;background:#585858;border-radius:3px 0 0 3px"></div>
<svg class="abs" style="left:241px;top:24px" width="14" height="14"><g fill="none" stroke="#dcdcdc" stroke-width="1.3"><path d="M1,4.5 V1 H4.5 M9.5,1 H13 V4.5 M13,9.5 V13 H9.5 M4.5,13 H1 V9.5"/><rect x="4.2" y="4.2" width="5.6" height="5.6"/></g></svg>
<div class="abs" style="left:259px;top:21px;width:14px;height:22px;background:#585858;border-radius:0 3px 3px 0"></div>
<svg class="abs" style="left:261px;top:27px" width="10" height="8"><path d="M0.5,1.5 H8.5 L4.5,6.5 Z" fill="#c4c4c4"/></svg>
</div>
</div>
<div id="divider"></div>
<div class="insp">
<div style="left:95px;top:0;width:537px;height:3px;background:#191919"></div>
<svg style="left:6px;top:12px" width="26" height="28"><polygon points="11.5,1.5 21,6 11.5,10.5 2,6" fill="#8fdcff"/><polygon points="2,6 11.5,10.5 11.5,22.5 2,17.5" fill="#6ccaf7"/><polygon points="21,6 11.5,10.5 11.5,22.5 21,17.5" fill="#55bdf0"/><path d="M11.5,10.5 V22 M2.3,6.2 L11.5,10.5 L20.7,6.2" stroke="#383838" stroke-width="1.2" fill="none"/><path d="M20.5,22.5 H27 L23.7,26.5 Z" fill="#c4c4c4"/></svg>
<div class="cb" style="left:45px;top:14px"><svg width="12" height="12" style="left:0;top:0"><path d="M2.3,6.4 L4.9,8.9 L9.9,3.3" fill="none" stroke="#e4e4e4" stroke-width="1.5"/></svg></div>
<div class="fld" style="left:65px;top:12px;width:488px;height:18px"><div class="t b" style="left:1px;top:1px;font-size:13.4px;letter-spacing:.6px;color:#d2d2d2">ChessPiece (4)</div></div>
<div class="cb" style="left:556px;top:14px"></div>
<div class="t " style="left:574px;top:13.5px;color:#ababab">Static</div>
<svg width="10" height="8" style="left:618px;top:18px"><path d="M0.5,1.5 H8.5 L4.5,6.5 Z" fill="#c4c4c4"/></svg>
<div class="t " style="left:40px;top:38px;color:#ababab">Tag</div>
<div class="dd" style="left:65px;top:36px;width:263px;height:18px;"><div class="t" style="left:2px;top:0px">Untagged</div><svg width="10" height="8" style="right:3px;top:4px"><path d="M0.5,1.5 H8.5 L4.5,6.5 Z" fill="#c4c4c4"/></svg></div>
<div class="t " style="left:341px;top:38px;color:#ababab">Layer</div>
<div class="dd" style="left:376px;top:36px;width:253px;height:18px;"><div class="t" style="left:2px;top:0px">Default</div><svg width="10" height="8" style="right:3px;top:4px"><path d="M0.5,1.5 H8.5 L4.5,6.5 Z" fill="#c4c4c4"/></svg></div>
<div class="t " style="left:22px;top:70px;color:#ababab">Prefab</div>
<div class="fld" style="left:64px;top:68px;width:564px;height:18px"><svg width="12" height="12" style="left:3px;top:2px"><polygon points="6,0.5 11,3 6,5.5 1,3" fill="#8fdcff"/><polygon points="1,3 6,5.5 6,11.5 1,9" fill="#5fc4f5"/><polygon points="11,3 6,5.5 6,11.5 11,9" fill="#4ab4ea"/><path d="M6,5.5V11.5M1,3L6,5.5L11,3" stroke="#2a2a2a" stroke-width=".8" fill="none"/></svg><div class="t" style="left:16px;top:1px">ChessPiece</div><div style="right:0;top:0;width:18px;height:16px;background:#373737;border-radius:0 2px 2px 0"><svg width="12" height="12" style="left:3px;top:2px"><circle cx="6" cy="6" r="4.4" fill="none" stroke="#c4c4c4" stroke-width="1.1"/><circle cx="6" cy="6" r="1.6" fill="#c4c4c4"/></svg></div></div>
<div class="dd" style="left:65px;top:90px;width:194px;height:18px;"><div class="t" style="left:2px;top:0px">Overrides</div><svg width="10" height="8" style="right:3px;top:4px"><path d="M0.5,1.5 H8.5 L4.5,6.5 Z" fill="#c4c4c4"/></svg></div>
<div class="btn" style="left:293px;top:90px;width:168px;height:18px"><div class="t" style="left:0;width:100%;top:0px;text-align:center">Select</div></div>
<div class="btn" style="left:464px;top:90px;width:163px;height:18px"><div class="t" style="left:0;width:100%;top:0px;text-align:center">Open</div></div>
<div class="hdr" style="top:113px"><svg width="10" height="10" style="left:6px;top:7px"><path d="M0.3,0.5 H9.2 L4.75,8.2 Z" fill="#7a7a7a"/></svg><svg width="16" height="14" style="left:20.5px;top:4px"><path d="M8,7.5 V2" stroke="#a4e04a" stroke-width="2.2" stroke-linecap="round"/><path d="M8,7.5 L3,10.6" stroke="#6fd0ff" stroke-width="2.2" stroke-linecap="round"/><path d="M8,7.5 L13,10.6" stroke="#f26a3c" stroke-width="2.2" stroke-linecap="round"/></svg>
<div class="t b" style="left:60px;top:3px">Transform</div><svg width="12" height="12" style="left:574px;top:4px"><circle cx="6" cy="6" r="5.2" fill="#c4c4c4"/><text x="6" y="9.6" text-anchor="middle" font-family="Liberation Sans, sans-serif" font-weight="bold" font-size="9.5" fill="#3e3e3e">?</text></svg><svg width="12" height="12" style="left:594px;top:4px"><path d="M1,3.5 H6.5 M9,3.5 H11 M1,8.5 H3.5 M6,8.5 H11" stroke="#c4c4c4" stroke-width="1.2" fill="none"/><path d="M7.8,1 V6 M4.8,6 V11" stroke="#c4c4c4" stroke-width="2" fill="none"/></svg><svg width="4" height="12" style="left:618px;top:4px"><rect x="0.7" y="0.5" width="2.4" height="2.4" fill="#c4c4c4"/><rect x="0.7" y="4.8" width="2.4" height="2.4" fill="#c4c4c4"/><rect x="0.7" y="9.1" width="2.4" height="2.4" fill="#c4c4c4"/></svg></div>
<div class="t b" style="left:19px;top:141.3px;">Position</div>
<div class="t " style="left:266px;top:141.3px;">X</div>
<div class="fld" style="left:281px;top:139px;width:103px;height:18px"><div class="t b num" style="left:2px;top:1px;">4.1082</div></div>
<div class="t " style="left:389.5px;top:141.3px;">Y</div>
<div class="fld" style="left:404px;top:139px;width:103px;height:18px"><div class="t b num" style="left:2px;top:1px;">0.9352</div></div>
<div class="t " style="left:512px;top:141.3px;">Z</div>
<div class="fld" style="left:526px;top:139px;width:103px;height:18px"><div class="t b num" style="left:2px;top:1px;">8.0453</div></div>
<div class="t b" style="left:19px;top:161.3px;">Rotation</div>
<div class="t " style="left:266px;top:161.3px;">X</div>
<div class="fld" style="left:281px;top:159px;width:103px;height:18px"><div class="t b num" style="left:2px;top:1px;">0</div></div>
<div class="t " style="left:389.5px;top:161.3px;">Y</div>
<div class="fld" style="left:404px;top:159px;width:103px;height:18px"><div class="t b num" style="left:2px;top:1px;">0</div></div>
<div class="t " style="left:512px;top:161.3px;">Z</div>
<div class="fld" style="left:526px;top:159px;width:103px;height:18px"><div class="t b num" style="left:2px;top:1px;">0</div></div>
<div class="t " style="left:19px;top:181.3px;">Scale</div>
<div class="t " style="left:266px;top:181.3px;">X</div>
<div class="fld" style="left:280px;top:179px;width:104px;height:18px"><div class="t num" style="left:2px;top:1px;">1</div></div>
<div class="t " style="left:389.5px;top:181.3px;">Y</div>
<div class="fld" style="left:403px;top:179px;width:104px;height:18px"><div class="t num" style="left:2px;top:1px;">1</div></div>
<div class="t " style="left:512px;top:181.3px;">Z</div>
<div class="fld" style="left:525px;top:179px;width:104px;height:18px"><div class="t num" style="left:2px;top:1px;">1</div></div>
<svg width="14" height="12" style="left:243px;top:182px"><g fill="none" stroke="#c4c4c4" stroke-width="1.1"><path d="M5.5,3.2 H4 a2.8,2.8 0 0 0 0,5.6 H5.5 M8.5,3.2 H10 a2.8,2.8 0 0 1 0,5.6 H8.5"/><path d="M1.5,1 L12.5,11"/></g></svg>
<div class="hdr" style="top:206px"><svg width="10" height="10" style="left:7px;top:6px"><path d="M0.5,0.3 L8.2,5 L0.5,9.7 Z" fill="#7a7a7a"/></svg><svg width="12.2" height="14.2" viewBox="0 0 13 15" style="left:22px;top:3.4px"><path d="M1.5,0.5 H8.5 L12.5,4.5 V13.5 Q12.5,14.5 11.5,14.5 H1.5 Q0.5,14.5 0.5,13.5 V1.5 Q0.5,0.5 1.5,0.5Z" fill="#ececec"/><path d="M8.5,0.5 V4.5 H12.5Z" fill="#cfcfcf"/><path d="M4.6,4.2 L4,11.8 M8.1,4.2 L7.5,11.8 M2.4,6.4 H10.2 M2.2,9.4 H10" stroke="#2b7d2b" stroke-width="1.3" fill="none"/></svg>
<div class="cb" style="left:40px;top:3px"><svg width="12" height="12" style="left:0;top:0"><path d="M2.3,6.4 L4.9,8.9 L9.9,3.3" fill="none" stroke="#e4e4e4" stroke-width="1.5"/></svg></div>
<div class="t b" style="left:60px;top:3px">Interactable (Script)</div><svg width="12" height="12" style="left:574px;top:4px"><circle cx="6" cy="6" r="5.2" fill="#c4c4c4"/><text x="6" y="9.6" text-anchor="middle" font-family="Liberation Sans, sans-serif" font-weight="bold" font-size="9.5" fill="#3e3e3e">?</text></svg><svg width="12" height="12" style="left:594px;top:4px"><path d="M1,3.5 H6.5 M9,3.5 H11 M1,8.5 H3.5 M6,8.5 H11" stroke="#c4c4c4" stroke-width="1.2" fill="none"/><path d="M7.8,1 V6 M4.8,6 V11" stroke="#c4c4c4" stroke-width="2" fill="none"/></svg><svg width="4" height="12" style="left:618px;top:4px"><rect x="0.7" y="0.5" width="2.4" height="2.4" fill="#c4c4c4"/><rect x="0.7" y="4.8" width="2.4" height="2.4" fill="#c4c4c4"/><rect x="0.7" y="9.1" width="2.4" height="2.4" fill="#c4c4c4"/></svg></div>
<div class="hdr" style="top:228px"><svg width="10" height="10" style="left:6px;top:7px"><path d="M0.3,0.5 H9.2 L4.75,8.2 Z" fill="#7a7a7a"/></svg><svg width="12.2" height="14.2" viewBox="0 0 13 15" style="left:22px;top:3.4px"><path d="M1.5,0.5 H8.5 L12.5,4.5 V13.5 Q12.5,14.5 11.5,14.5 H1.5 Q0.5,14.5 0.5,13.5 V1.5 Q0.5,0.5 1.5,0.5Z" fill="#ececec"/><path d="M8.5,0.5 V4.5 H12.5Z" fill="#cfcfcf"/><path d="M4.6,4.2 L4,11.8 M8.1,4.2 L7.5,11.8 M2.4,6.4 H10.2 M2.2,9.4 H10" stroke="#2b7d2b" stroke-width="1.3" fill="none"/></svg>
<div class="cb" style="left:40px;top:3px"><svg width="12" height="12" style="left:0;top:0"><path d="M2.3,6.4 L4.9,8.9 L9.9,3.3" fill="none" stroke="#e4e4e4" stroke-width="1.5"/></svg></div>
<div class="t b" style="left:60px;top:3px">Pickupable (Script)</div><svg width="12" height="12" style="left:574px;top:4px"><circle cx="6" cy="6" r="5.2" fill="#c4c4c4"/><text x="6" y="9.6" text-anchor="middle" font-family="Liberation Sans, sans-serif" font-weight="bold" font-size="9.5" fill="#3e3e3e">?</text></svg><svg width="12" height="12" style="left:594px;top:4px"><path d="M1,3.5 H6.5 M9,3.5 H11 M1,8.5 H3.5 M6,8.5 H11" stroke="#c4c4c4" stroke-width="1.2" fill="none"/><path d="M7.8,1 V6 M4.8,6 V11" stroke="#c4c4c4" stroke-width="2" fill="none"/></svg><svg width="4" height="12" style="left:618px;top:4px"><rect x="0.7" y="0.5" width="2.4" height="2.4" fill="#c4c4c4"/><rect x="0.7" y="4.8" width="2.4" height="2.4" fill="#c4c4c4"/><rect x="0.7" y="9.1" width="2.4" height="2.4" fill="#c4c4c4"/></svg></div>
<div class="bar" style="top:261px"><svg width="10" height="10" style="left:5px;top:5px"><path d="M0.5,0.5 L8.5,5 L0.5,9.5 Z" fill="#7e6a6a"/></svg><div class="t" style="left:31px;top:3px;font-size:13.5px;letter-spacing:.12px;color:#d0caca">Pickupable</div></div>
<div class="bar" style="top:292px"><svg width="10" height="10" style="left:5px;top:5px"><path d="M0.5,0.5 L8.5,5 L0.5,9.5 Z" fill="#7e6a6a"/></svg><div class="t" style="left:31px;top:3px;font-size:13.5px;letter-spacing:.12px;color:#d0caca">Holding</div></div>
<div class="bar" style="top:323px"><svg width="10" height="10" style="left:4px;top:6px"><path d="M0.3,0.5 H9.2 L4.75,8.5 Z" fill="#7e6a6a"/></svg><div class="t" style="left:31px;top:3px;font-size:13.5px;letter-spacing:.12px;color:#d0caca">Placement</div></div>
<div style="left:18px;top:357px;width:614px;height:106px;background:#343434"></div>
<div class="t " style="left:37px;top:369.2px;">Can Place Down</div>
<div class="cb" style="left:268px;top:369px"><svg width="12" height="12" style="left:0;top:0"><path d="M2.3,6.4 L4.9,8.9 L9.9,3.3" fill="none" stroke="#e4e4e4" stroke-width="1.5"/></svg></div>
<div class="t " style="left:37px;top:397.4px;">Placement Pivot</div>
<div class="fld" style="left:268px;top:395px;width:358px;height:18px"><div class="t" style="left:1px;top:1px;color:#9a9a9a">None (Transform)</div><div style="right:0;top:0;width:18px;height:16px;background:#373737;border-radius:0 2px 2px 0"><svg width="12" height="12" style="left:3px;top:2px"><circle cx="6" cy="6" r="4.4" fill="none" stroke="#c4c4c4" stroke-width="1.1"/><circle cx="6" cy="6" r="1.6" fill="#c4c4c4"/></svg></div></div>
<div class="t " style="left:37px;top:417.2px;">Placement Type</div>
<div class="dd" style="left:268px;top:415px;width:358px;height:18px;"><div class="t" style="left:2px;top:0px">Place Point</div><svg width="10" height="8" style="right:3px;top:4px"><path d="M0.5,1.5 H8.5 L4.5,6.5 Z" fill="#c4c4c4"/></svg></div>
<div class="t " style="left:37px;top:437.5px;">Place Point Tag</div>
<div class="fld" style="left:268px;top:435px;width:358px;height:18px"><div class="t " style="left:2px;top:1px;">ChessPiece</div></div>
<div class="bar" style="top:474px"><svg width="10" height="10" style="left:5px;top:5px"><path d="M0.5,0.5 L8.5,5 L0.5,9.5 Z" fill="#7e6a6a"/></svg><div class="t" style="left:31px;top:3px;font-size:13.5px;letter-spacing:.12px;color:#d0caca">Sounds</div></div>
<div class="bar" style="top:505px"><svg width="10" height="10" style="left:5px;top:5px"><path d="M0.5,0.5 L8.5,5 L0.5,9.5 Z" fill="#7e6a6a"/></svg><div class="t" style="left:31px;top:3px;font-size:13.5px;letter-spacing:.12px;color:#d0caca">Events</div></div>
<div class="hdr" style="top:536px;height:23px;border-bottom:1px solid #1a1a1a"><svg width="10" height="10" style="left:7px;top:6px"><path d="M0.5,0.3 L8.2,5 L0.5,9.7 Z" fill="#7a7a7a"/></svg><svg width="14" height="14" style="left:21px;top:4px"><polygon points="7,0.5 13,3.5 7,6.5 1,3.5" fill="#b6f56a"/><polygon points="1,3.5 7,6.5 7,13.5 1,10.5" fill="#96e64a"/><polygon points="13,3.5 7,6.5 7,13.5 13,10.5" fill="#7fd638"/><path d="M7,6.5V13.5M1,3.5L7,6.5L13,3.5" stroke="#3e3e3e" stroke-width=".9" fill="none"/></svg>
<div class="cb" style="left:40px;top:3px"><svg width="12" height="12" style="left:0;top:0"><path d="M2.3,6.4 L4.9,8.9 L9.9,3.3" fill="none" stroke="#e4e4e4" stroke-width="1.5"/></svg></div>
<div class="t b" style="left:60px;top:3px">Box Collider</div><svg width="12" height="12" style="left:574px;top:4px"><circle cx="6" cy="6" r="5.2" fill="#c4c4c4"/><text x="6" y="9.6" text-anchor="middle" font-family="Liberation Sans, sans-serif" font-weight="bold" font-size="9.5" fill="#3e3e3e">?</text></svg><svg width="12" height="12" style="left:594px;top:4px"><path d="M1,3.5 H6.5 M9,3.5 H11 M1,8.5 H3.5 M6,8.5 H11" stroke="#c4c4c4" stroke-width="1.2" fill="none"/><path d="M7.8,1 V6 M4.8,6 V11" stroke="#c4c4c4" stroke-width="2" fill="none"/></svg><svg width="4" height="12" style="left:618px;top:4px"><rect x="0.7" y="0.5" width="2.4" height="2.4" fill="#c4c4c4"/><rect x="0.7" y="4.8" width="2.4" height="2.4" fill="#c4c4c4"/><rect x="0.7" y="9.1" width="2.4" height="2.4" fill="#c4c4c4"/></svg></div>
<div class="btn" style="left:203px;top:567px;width:229px;height:24px"><div class="t" style="left:0;width:100%;top:3px;text-align:center;letter-spacing:.42px">Add Component</div></div>
</div>
</body></html>
